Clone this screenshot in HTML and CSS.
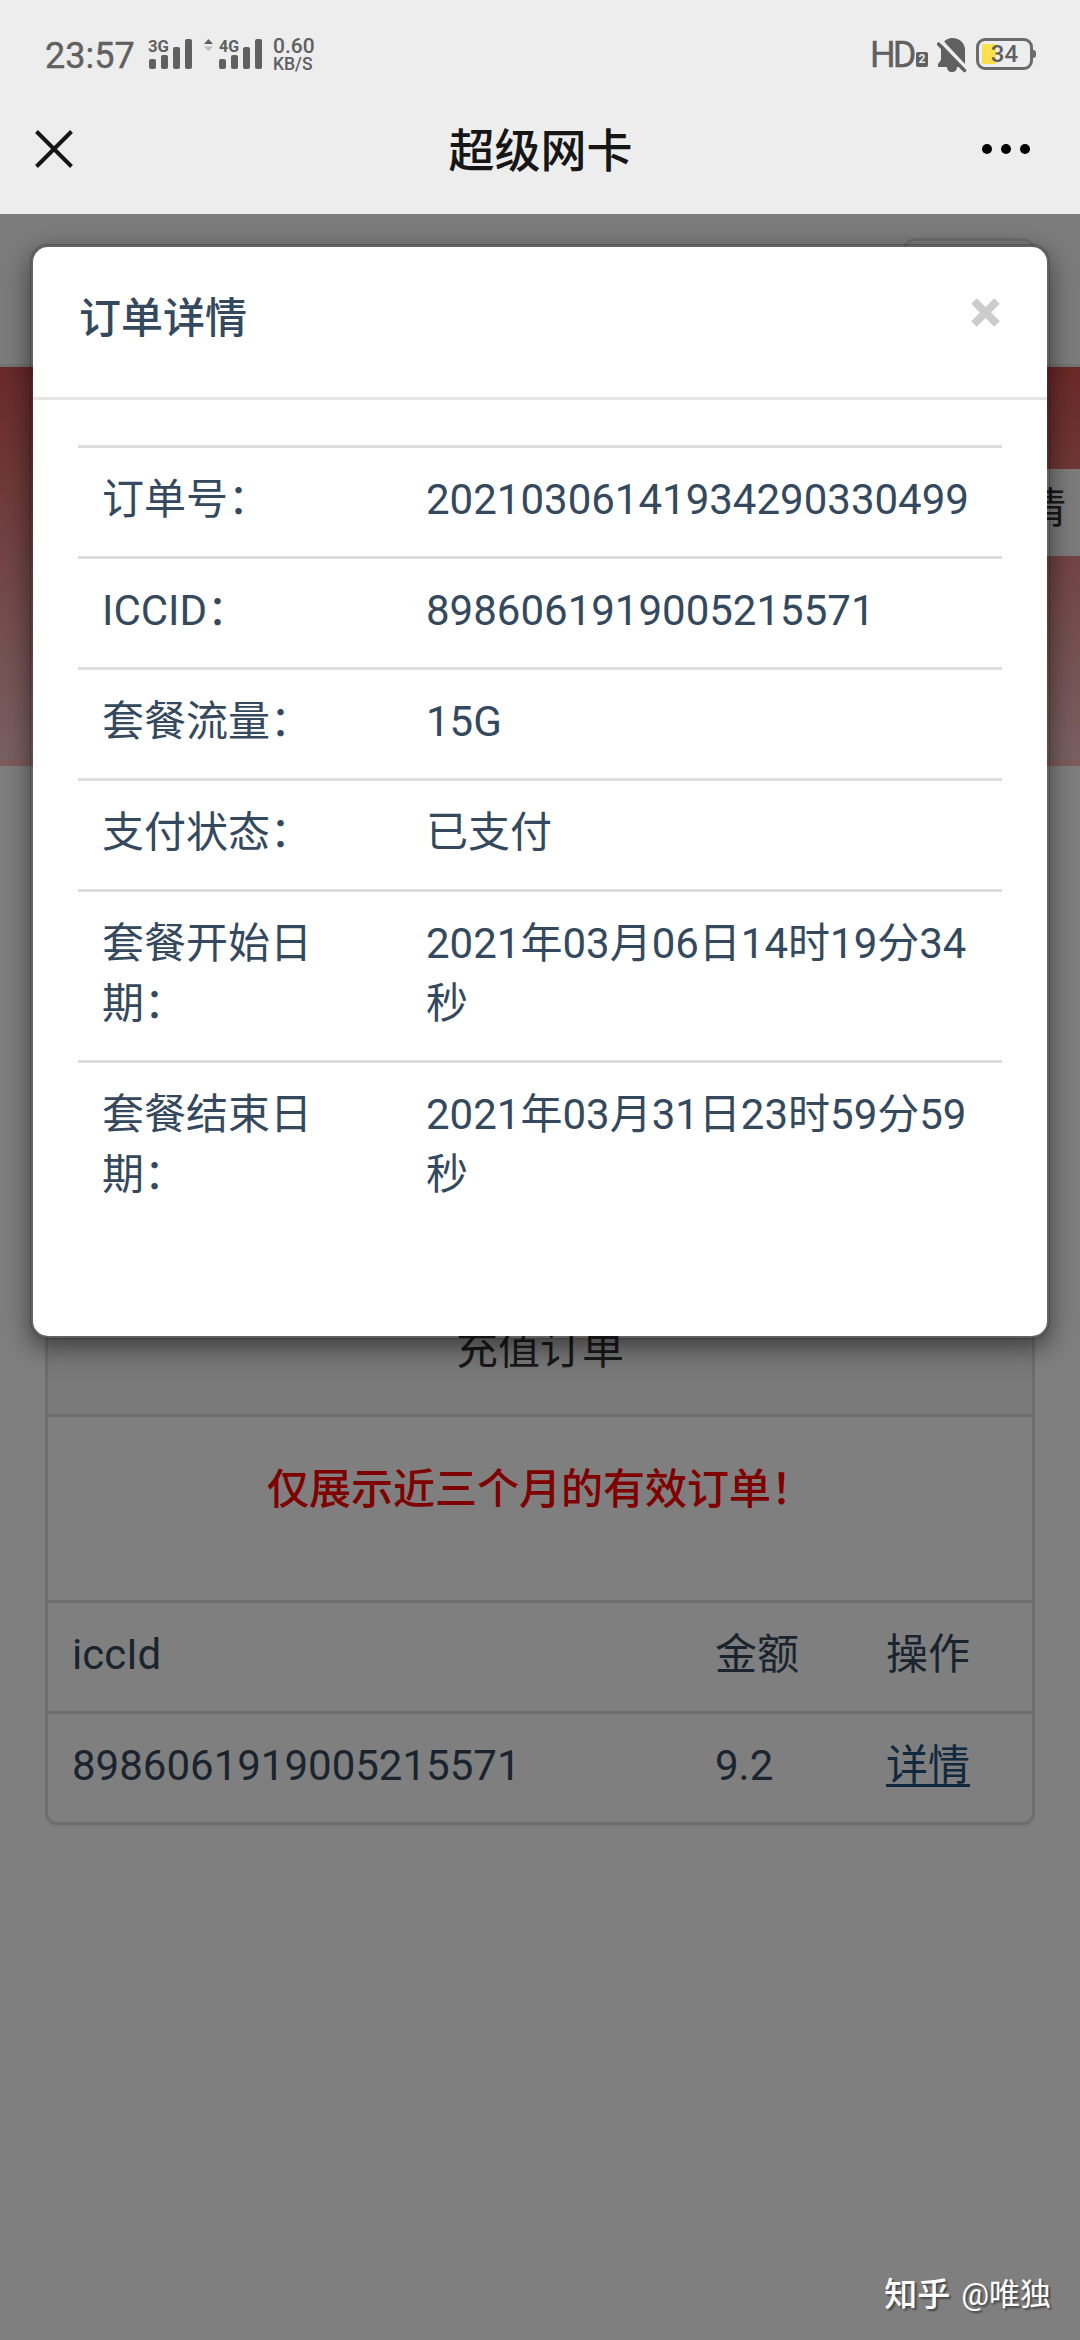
FILE: index.html
```html
<!DOCTYPE html>
<html lang="zh-CN">

<head>
    <meta charset="utf-8">
    <meta name="viewport" content="width=device-width, initial-scale=1">
    <title>超级网卡</title>
    <link rel="stylesheet" href="styles.css">
</head>

<body>
    <header class="app-header">
        <div class="status-bar">
            <span class="clock">23:57</span>
            <svg class="signals" width="115" height="34" viewBox="0 0 115 34">
                <g class="signal-bars">
                    <rect x="1" y="22" width="7" height="10" rx="2"/>
                    <rect x="13" y="18" width="7" height="14" rx="2"/>
                    <rect x="25" y="10" width="7" height="22" rx="2"/>
                    <rect x="37" y="2" width="7" height="30" rx="2"/>
                    <rect x="71" y="22" width="7" height="10" rx="2"/>
                    <rect x="83" y="18" width="7" height="14" rx="2"/>
                    <rect x="95" y="10" width="7" height="22" rx="2"/>
                    <rect x="107" y="2" width="7" height="30" rx="2"/>
                    <path d="M56 7l4.500-5L65 7z"/>
                    <path d="M56 9.500l4.500 4.500L65 9.500z" opacity=".35"/>
                </g>
                <text x="0" y="14.500" textLength="21" lengthAdjust="spacingAndGlyphs">3G</text>
                <text x="71" y="14.500" textLength="20" lengthAdjust="spacingAndGlyphs">4G</text>
            </svg>
            <div class="net-speed"><span class="rate">0.60</span><span class="unit">KB/S</span></div>

            <div class="status-right">
                <span class="hd">HD</span>
                <span class="sim">2</span>
                <svg class="bell" width="30" height="36" viewBox="0 0 30 36">
                    <path d="M15 1C9 1 4 6 4 13v10l-3 4v3h9c0 3 2 5 5 5s5-2 5-5h8V13C28 6 23 1 15 1z"/>
                    <path class="bell-gap" d="M3 3l26 28"/>
                    <path class="bell-slash" d="M1.500 7l26 26.500"/>
                </svg>
                <div class="battery"><span>34</span></div>
            </div>
        </div>
        <div class="title-bar">
            <svg class="title-close" width="38" height="38" viewBox="0 0 38 38"><path d="M1.500 1.500l35 35M36.500 1.500l-35 35"/></svg>
            <h1>超级网卡</h1>
            <svg class="title-more" width="50" height="12" viewBox="0 0 50 12">
                <circle cx="6" cy="6" r="5"/><circle cx="25" cy="6" r="5"/><circle cx="44" cy="6" r="5"/>
            </svg>
        </div>
    </header>

    <main class="page">
        <nav class="navbar"><span class="navbar-toggle"></span></nav>
        <section class="banner">
            <div class="banner-title">详情</div>
        </section>
        <section class="panel">
            <div class="panel-heading">充值订单</div>
            <div class="panel-body">仅展示近三个月的有效订单！</div>
            <table class="orders">
                <thead>
                    <tr><th class="col-id">iccId</th><th class="col-price">金额</th><th>操作</th></tr>
                </thead>
                <tbody>
                    <tr><td>8986061919005215571</td><td>9.2</td><td><a href="#">详情</a></td></tr>
                </tbody>
            </table>
        </section>

        <div class="backdrop">
            <div class="modal">
                <div class="modal-header">
                    <h4>订单详情</h4>
                    <svg class="modal-close" width="29" height="29" viewBox="0 0 29 29"><path d="M3 3l23 23M26 3L3 26"/></svg>
                </div>
                <div class="modal-body">
                    <table class="detail">
                        <tr><td class="label">订单号：</td><td>20210306141934290330499</td></tr>
                        <tr><td class="label">ICCID：</td><td>8986061919005215571</td></tr>
                        <tr><td class="label">套餐流量：</td><td>15G</td></tr>
                        <tr><td class="label">支付状态：</td><td>已支付</td></tr>
                        <tr><td class="label">套餐开始日期：</td><td>2021年03月06日14时19分34秒</td></tr>
                        <tr><td class="label">套餐结束日期：</td><td>2021年03月31日23时59分59秒</td></tr>
                    </table>
                </div>
            </div>
            <div class="watermark"><b>知乎</b><span>@唯独</span></div>
        </div>
    </main>
</body>

</html>
```
FILE: styles.css
```css
*,
*:before,
*:after {
    box-sizing: border-box;
}

body {
    display: flex;
    flex-direction: column;
    width: 1080px;
    height: 2340px;
    margin: 0;
    overflow: hidden;
    font-family: Roboto, "Noto Sans CJK SC", sans-serif;
    font-size: 42px;
    line-height: 60px;
    color: #34495e;
    background: #fff;
}

/* Status and title bars */
.app-header {
    height: 214px;
    background: #ededed;
}

.status-bar {
    display: flex;
    align-items: flex-start;
    height: 86px;
    padding: 37px 45px 0 45px;
    color: #606060;
}

.clock {
    width: 103px;
    font-size: 36px;
    line-height: 39px;
    -webkit-text-stroke: .4px #606060;
}

.signals {
    font-size: 17px;
    font-weight: 700;
    fill: #606060;
}

.net-speed {
    display: flex;
    flex-direction: column;
    margin-left: 10px;
    font-weight: 500;
}

.rate {
    font-size: 21px;
    line-height: 18px;
}

.unit {
    font-size: 17.5px;
    line-height: 19px;
}

.status-right {
    display: flex;
    margin-left: auto;
    margin-right: 2px;
}

.hd {
    width: 45px;
    font-size: 36px;
    line-height: 36px;
    letter-spacing: -3px;
    -webkit-text-stroke: .4px #606060;
}

.sim {
    width: 12px;
    height: 15px;
    margin: 15px 9px 0 1px;
    border-radius: 2px;
    font-size: 12px;
    font-weight: 700;
    line-height: 15px;
    text-align: center;
    color: #ededed;
    background: #606060;
}

.bell {
    margin-right: 9px;
    fill: #606060;
}

.bell-gap,
.bell-slash {
    fill: none;
    stroke: #ededed;
    stroke-width: 4;
}

.bell-slash {
    stroke: #606060;
    stroke-linecap: round;
    stroke-width: 3.5;
}

.battery {
    position: relative;
    width: 57px;
    height: 32px;
    margin-top: 1px;
    border: 3px solid #6b6b6b;
    border-radius: 9px;
    font-size: 24px;
    font-weight: 500;
    line-height: 27px;
    text-align: center;
    background: linear-gradient(#fbe04e, #fbe04e) 3px 3px / 14px 20px no-repeat;
}

.battery:after {
    content: "";
    position: absolute;
    top: 9px;
    right: -6px;
    width: 3px;
    height: 8px;
    border-radius: 0 3px 3px 0;
    background: #6b6b6b;
}

.title-bar {
    display: flex;
    align-items: center;
    justify-content: space-between;
    height: 126px;
    padding: 0 49px 0 35px;
}

.title-close {
    fill: none;
    stroke: #161616;
    stroke-width: 4;
}

.title-bar h1 {
    margin: 4px 0 0 27px;
    font-size: 46px;
    font-weight: 500;
    color: #161616;
}

/* Page behind the modal */
.page {
    position: relative;
    flex: 1;
}

.navbar {
    display: flex;
    justify-content: flex-end;
    height: 153px;
    padding: 24px 45px 0;
    border-bottom: 3px solid #e7e7e7;
    background: #f8f8f8;
}

.navbar-toggle {
    width: 132px;
    height: 102px;
    border: 3px solid #ddd;
    border-radius: 12px;
}

.banner {
    display: flex;
    justify-content: flex-end;
    height: 399px;
    padding-top: 102px;
    background: linear-gradient(#d65252, #f5c2c4 98.5%, #ffb8b8 98.5%);
}

.banner-title {
    width: 120px;
    height: 87px;
    padding: 10px 14px 0 0;
    text-align: right;
    color: #333;
    background: #f8f8f8;
}

.panel {
    margin: 525px 45px 0;
    border: 3px solid #ddd;
    border-radius: 12px;
    box-shadow: 0 3px 3px rgba(0, 0, 0, .05);
}

.panel-heading {
    height: 123px;
    padding-top: 26px;
    border-bottom: 3px solid #ddd;
    text-align: center;
    color: #333;
    background: #f5f5f5;
}

.panel-body {
    height: 183px;
    padding-top: 43px;
    font-weight: 500;
    text-align: center;
    color: #f00;
}

.orders,
.detail {
    width: 100%;
    border-collapse: separate;
    border-spacing: 0;
    table-layout: fixed;
}

.orders th,
.orders td,
.detail td {
    padding: 22px 24px 26px;
    border-top: 3px solid #ddd;
    font-weight: 400;
    text-align: left;
    vertical-align: top;
}

.col-id {
    width: 643px;
}

.col-price {
    width: 171px;
}

.orders a {
    color: #23527c;
    text-decoration: underline;
    text-decoration-thickness: 3px;
    text-underline-offset: 4px;
}

/* Modal */
.backdrop {
    position: absolute;
    top: 0;
    left: 0;
    width: 100%;
    height: 100%;
    padding: 30px;
    overflow: hidden;
    background: rgba(0, 0, 0, .5);
}

.modal {
    height: 1095px;
    border: 3px solid rgba(0, 0, 0, .2);
    border-radius: 18px;
    background: #fff;
    background-clip: padding-box;
    box-shadow: 0 9px 27px rgba(0, 0, 0, .5);
}

.modal-header {
    display: flex;
    justify-content: space-between;
    height: 153px;
    padding: 42px 47px 0 46px;
    border-bottom: 3px solid #e5e5e5;
}

.modal-header h4 {
    margin: 0;
    font-size: 42px;
    font-weight: 500;
}

.modal-close {
    margin-top: 9px;
    fill: none;
    stroke: #ccc;
    stroke-width: 8;
}

.modal-body {
    padding: 45px;
}

.detail .label {
    width: 324px;
}

.watermark {
    position: absolute;
    right: 29px;
    bottom: 23px;
    display: flex;
    gap: 11px;
    font-size: 31px;
    line-height: 44px;
    color: #fff;
    text-shadow: 2px 2px 2px rgba(0, 0, 0, .45);
}

.watermark b {
    font-size: 33px;
    font-weight: 500;
}
```
